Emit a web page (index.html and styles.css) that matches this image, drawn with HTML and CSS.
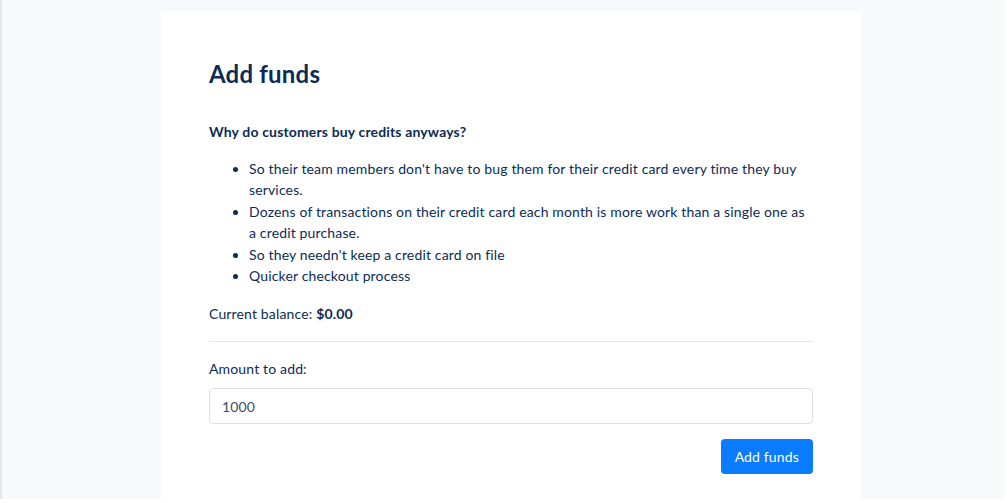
FILE: index.html
```html
<!DOCTYPE html>
<html lang="en">
<head>
<meta charset="utf-8">
<title>Add funds</title>
<link rel="stylesheet" href="styles.css">
</head>
<body>
<div class="page">
  <main class="card">
    <h1 class="title">Add funds</h1>
    <h2 class="subtitle">Why do customers buy credits anyways?</h2>
    <ul class="reasons">
      <li>So their team members don't have to bug them for their credit card every time they buy services.</li>
      <li>Dozens of transactions on their credit card each month is more work than a single one as a credit purchase.</li>
      <li>So they needn't keep a credit card on file</li>
      <li>Quicker checkout process</li>
    </ul>
    <p class="balance">Current balance: <strong>$0.00</strong></p>
    <hr class="divider">
    <label class="label" for="amount">Amount to add:</label>
    <input class="input" id="amount" type="text" value="1000">
    <div class="actions">
      <button class="btn" type="button">Add funds</button>
    </div>
  </main>
</div>
</body>
</html>
```

FILE: styles.css
```css
html, body {
  margin: 0;
  padding: 0;
  background: #ffffff;
}
body {
  font-family: Lato, "Liberation Sans", sans-serif;
  color: #0c2c55;
  font-size: 14px;
  line-height: 21.4px;
  letter-spacing: 0.15px;
}
.page {
  background: #f8f9fb;
  border-left: 2px solid #e4e6ea;
  height: 499px;
  width: 1005px;
  box-sizing: border-box;
  padding-top: 11px;
  padding-left: 159px;
}
.card {
  background: #ffffff;
  width: 700px;
  height: 488px;
  box-sizing: border-box;
  padding: 48px 48px 0;
}
.title {
  margin: 0;
  font-size: 24px;
  line-height: 30px;
  font-weight: 700;
  letter-spacing: 0.2px;
}
.subtitle {
  margin: 32px 0 0;
  font-size: 14px;
  line-height: 21px;
  font-weight: 700;
}
.reasons {
  margin: 16px 0 0;
  padding-left: 40px;
}
.balance {
  margin: 17px 0 0;
}
.divider {
  margin: 16px 0 0;
  border: 0;
  border-top: 1px solid #e3e5e9;
}
.label {
  display: block;
  margin-top: 16px;
}
.input {
  display: block;
  margin-top: 9px;
  width: 100%;
  box-sizing: border-box;
  height: 36px;
  padding: 0 12px;
  border: 1px solid #dcdfe5;
  border-radius: 4px;
  font-family: inherit;
  font-size: 14px;
  letter-spacing: inherit;
  color: #3f4d63;
}
.actions {
  display: flex;
  justify-content: flex-end;
  margin-top: 15px;
}
.btn {
  background: #0a7cff;
  color: #ffffff;
  border: 0;
  border-radius: 4px;
  height: 35px;
  padding: 0 14px;
  font-family: inherit;
  font-size: 14px;
  letter-spacing: inherit;
}
```
